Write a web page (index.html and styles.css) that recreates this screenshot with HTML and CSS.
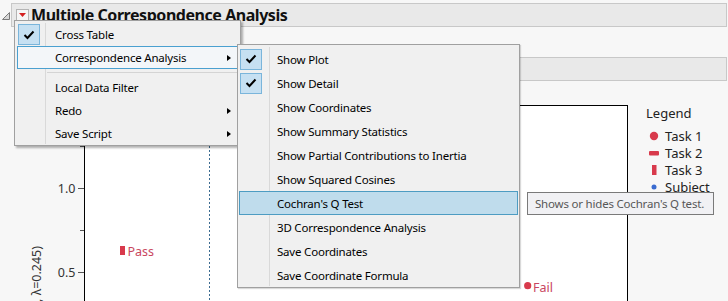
FILE: index.html
```html
<!DOCTYPE html>
<html lang="en">
<head>
    <meta charset="UTF-8">
    <title>Multiple Correspondence Analysis</title>
    <link rel="stylesheet" href="styles.css">
</head>
<body>
    <div class="report">
        <div class="outline-row">
            <svg class="disclosure" width="10" height="10" viewBox="0 0 10 10"><path d="M8.5 1.5 L8.5 8.5 L1.5 8.5 Z" fill="#d8d8d8" stroke="#7a7a7a"/></svg>
            <div class="outline-head title-head">
                <span class="hotspot"><svg width="9" height="6" viewBox="0 0 9 6"><path d="M1 1 L8 1 L4.5 5 Z" fill="#d42020"/></svg></span>
                <span class="title">Multiple Correspondence Analysis</span>
            </div>
        </div>

        <div class="outline-body">
            <div class="outline-row">
                <svg class="disclosure" width="10" height="10" viewBox="0 0 10 10"><path d="M8.5 1.5 L8.5 8.5 L1.5 8.5 Z" fill="#d8d8d8" stroke="#444"/></svg>
                <div class="outline-head sub-head"></div>
            </div>

            <div class="plot-row">
                <svg class="y-axis" width="83" height="196">
                    <text class="axis-title" transform="translate(40 141) rotate(-90)" text-anchor="end">c2 (27.9%, λ=0.245)</text>
                    <line x1="79" y1="41.5" x2="83" y2="41.5" class="tick"/>
                    <line x1="77" y1="83.5" x2="83" y2="83.5" class="tick"/>
                    <line x1="79" y1="125.5" x2="83" y2="125.5" class="tick"/>
                    <line x1="77" y1="167.5" x2="83" y2="167.5" class="tick"/>
                    <text x="74.5" y="87.5" text-anchor="end" class="tick-label">1.0</text>
                    <text x="74.5" y="171.5" text-anchor="end" class="tick-label">0.5</text>
                </svg>
                <div class="frame">
                    <svg width="542" height="195">
                        <line x1="124.5" y1="0" x2="124.5" y2="195" class="ref-line"/>
                        <rect x="35" y="140" width="5" height="9" class="mark"/>
                        <text x="42.5" y="150" class="point-label">Pass</text>
                        <circle cx="442.7" cy="179.7" r="3.6" class="mark"/>
                        <text x="448" y="185.5" class="point-label">Fail</text>
                    </svg>
                </div>
                <div class="legend">
                    <div class="legend-title">Legend</div>
                    <div class="legend-item"><svg width="12" height="12"><circle cx="6" cy="6" r="4.2" class="mark"/></svg>Task 1</div>
                    <div class="legend-item"><svg width="12" height="12"><rect x="1" y="4" width="10" height="4.5" rx="1" class="mark"/></svg>Task 2</div>
                    <div class="legend-item"><svg width="12" height="12"><rect x="4" y="1" width="4.5" height="10" class="mark"/></svg>Task 3</div>
                    <div class="legend-item"><svg width="12" height="12"><circle cx="6" cy="6" r="2.5" fill="#3a6bd0"/></svg>Subject</div>
                </div>
            </div>
        </div>
    </div>

    <div class="menu menu-main">
        <div class="mi"><span class="icon"><span class="check"><svg width="12" height="10" viewBox="0 0 12 10"><path d="M1.5 5 L4.5 8 L10.5 1.5" fill="none" stroke="#000" stroke-width="2"/></svg></span></span><span class="label">Cross Table</span></div>
        <div class="mi open"><span class="icon"></span><span class="label">Correspondence Analysis</span><span class="arrow"></span></div>
        <div class="sep"></div>
        <div class="mi"><span class="icon"></span><span class="label">Local Data Filter</span></div>
        <div class="mi"><span class="icon"></span><span class="label">Redo</span><span class="arrow"></span></div>
        <div class="mi"><span class="icon"></span><span class="label">Save Script</span><span class="arrow"></span></div>
    </div>

    <div class="menu menu-sub">
        <div class="mi"><span class="icon"><span class="check"><svg width="12" height="10" viewBox="0 0 12 10"><path d="M1.5 5 L4.5 8 L10.5 1.5" fill="none" stroke="#000" stroke-width="2"/></svg></span></span><span class="label">Show Plot</span></div>
        <div class="mi"><span class="icon"><span class="check"><svg width="12" height="10" viewBox="0 0 12 10"><path d="M1.5 5 L4.5 8 L10.5 1.5" fill="none" stroke="#000" stroke-width="2"/></svg></span></span><span class="label">Show Detail</span></div>
        <div class="mi"><span class="icon"></span><span class="label">Show Coordinates</span></div>
        <div class="mi"><span class="icon"></span><span class="label">Show Summary Statistics</span></div>
        <div class="mi"><span class="icon"></span><span class="label">Show Partial Contributions to Inertia</span></div>
        <div class="mi"><span class="icon"></span><span class="label">Show Squared Cosines</span></div>
        <div class="mi hot"><span class="icon"></span><span class="label">Cochran's Q Test</span></div>
        <div class="mi"><span class="icon"></span><span class="label">3D Correspondence Analysis</span></div>
        <div class="mi"><span class="icon"></span><span class="label">Save Coordinates</span></div>
        <div class="mi"><span class="icon"></span><span class="label">Save Coordinate Formula</span></div>
    </div>

    <div class="tooltip">Shows or hides Cochran's Q test.</div>
</body>
</html>
```

FILE: styles.css
```css
body {
    margin: 0;
    width: 728px;
    height: 301px;
    overflow: hidden;
    position: relative;
    background-color: #f7f7f7;
    font-family: "Noto Sans", "Open Sans", sans-serif;
    font-size: 12px;
    color: #000;
}
.report {
    padding: 3px 1px 0 1px;
}
.outline-row {
    display: flex;
    align-items: center;
}
.disclosure {
    flex: none;
    margin-top: 2px;
}
.outline-head {
    flex: 1;
    height: 22px;
    border: 1px solid #c8c8c8;
    background-color: #e9e9e9;
}
.title-head {
    display: flex;
    align-items: center;
    gap: 2px;
    padding-left: 4px;
}
.hotspot {
    width: 11px;
    height: 11px;
    border: 1px solid #b4b4b4;
    background-color: #f6f6f6;
    display: flex;
    align-items: center;
    justify-content: center;
}
.title {
    font-size: 16px;
    font-weight: bold;
    letter-spacing: -0.45px;
    color: #111;
}
.outline-body {
    padding-left: 12px;
    margin-top: 30px;
}
.outline-body > .outline-row .disclosure {
    margin-top: 6px;
    margin-right: 2px;
}
.plot-row {
    display: flex;
    margin-top: 24px;
    margin-left: -12px;
    height: 196px;
}
.y-axis {
    flex: none;
}
.tick {
    stroke: #555;
    stroke-width: 1;
}
.tick-label,
.axis-title {
    font-size: 12.5px;
    fill: #333;
}
.frame {
    flex: none;
    width: 542px;
    border: 1px solid #000;
    border-bottom: none;
    background-color: #fff;
}
.frame svg {
    display: block;
}
.ref-line {
    stroke: #3d6c91;
    stroke-dasharray: 2 2;
}
.mark {
    fill: #d83a4c;
}
.point-label {
    font-size: 12.5px;
    fill: #c94660;
}
.legend {
    flex: 1;
    padding-left: 18px;
    font-size: 13px;
    color: #222;
}
.legend-title {
    line-height: 17px;
    margin-bottom: 5px;
}
.legend-item {
    display: flex;
    align-items: center;
    gap: 5px;
    height: 17px;
    margin-left: 2px;
}
.menu {
    position: absolute;
    background-color: #f0f0f0;
    border: 1px solid #a0a0a0;
    box-shadow: 2px 2px 2px rgba(0, 0, 0, 0.3);
    font-size: 11.5px;
    letter-spacing: -0.2px;
}
.menu::before {
    content: "";
    position: absolute;
    top: 2px;
    bottom: 1px;
    width: 1px;
    background-color: #d9d9d9;
}
.menu-main {
    left: 14px;
    top: 20px;
    width: 221px;
    padding: 2px 2px 0 2px;
}
.menu-main::before {
    left: 30px;
}
.menu-sub {
    left: 237px;
    top: 44px;
    width: 279px;
    padding: 2px 1px 0 1px;
    box-shadow: 1px 1px 1px rgba(0, 0, 0, 0.15);
}
.menu-sub::before {
    left: 31px;
}
.mi {
    position: relative;
    display: flex;
    align-items: center;
    height: 23px;
    border: 1px solid transparent;
    box-sizing: border-box;
}
.menu-sub .mi {
    height: 24px;
}
.mi.open {
    border-color: #4aa0d0;
    background-color: #f3f6f9;
}
.mi.hot {
    border-color: #4d9cc2;
    background-color: #bfdcec;
}
.icon {
    flex: none;
    width: 37px;
    align-self: stretch;
    display: flex;
    align-items: center;
}
.check {
    width: 20px;
    height: 19px;
    border: 1px solid #7ab5db;
    background-color: #c6e0f2;
    display: flex;
    align-items: center;
    justify-content: center;
}
.label {
    flex: 1;
    white-space: nowrap;
}
.arrow {
    width: 0;
    height: 0;
    border-top: 3.5px solid transparent;
    border-bottom: 3.5px solid transparent;
    border-left: 4px solid #000;
    margin-right: 6px;
}
.sep {
    height: 7px;
    margin-left: 30px;
    background: linear-gradient(#d4d4d4, #d4d4d4) no-repeat 0 3px / 100% 1px;
}
.tooltip {
    position: absolute;
    left: 527px;
    top: 192px;
    width: 178px;
    height: 21px;
    padding-left: 7px;
    border: 1px solid #7a7a7a;
    background-color: #f1f1f4;
    color: #575757;
    font-size: 11.5px;
    letter-spacing: -0.2px;
    line-height: 21px;
    white-space: nowrap;
}
```
